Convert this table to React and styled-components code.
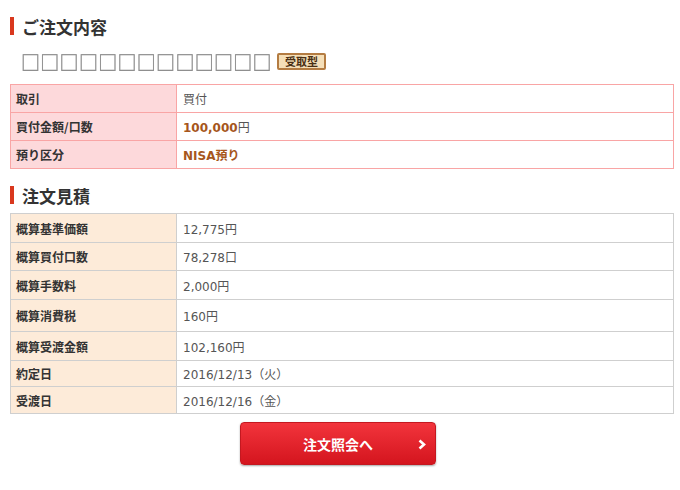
import styled, { createGlobalStyle } from "styled-components";

const GlobalStyle = createGlobalStyle`
  body {
    margin: 0;
    background: #fff;
    font-family: "DejaVu Sans", "Noto Sans CJK JP", sans-serif;
    color: #333;
  }
`;

const Page = styled.div`
  width: 680px;
  height: 490px;
  padding: 16px 6px 0 10px;
  box-sizing: border-box;
`;

const Heading = styled.h2`
  margin: 0 0 ${(p) => p.$gap}px 0;
  display: flex;
  align-items: center;
  height: 20px;
  font-size: 17px;
  font-weight: bold;
  color: #333;
  font-family: "Noto Sans CJK JP", sans-serif;
  &::before {
    content: "";
    width: 4px;
    height: 18px;
    background: #d9381e;
    margin-right: 8px;
  }
`;

const NameRow = styled.div`
  display: flex;
  align-items: center;
  gap: 5px;
  padding-left: 11px;
  height: 20px;
  margin-bottom: 13px;
`;

const Squares = styled.span`
  display: inline-block;
  transform: translateZ(0);
  font-family: "Noto Sans CJK JP", sans-serif;
  font-size: 19px;
  color: #8a8a8a;
  -webkit-text-stroke: 0.35px #8a8a8a;
  letter-spacing: 0.3px;
  line-height: 1;
`;

const Badge = styled.span`
  display: inline-flex;
  align-items: center;
  justify-content: center;
  width: 49px;
  height: 17px;
  box-sizing: border-box;
  background: #f5dfb8;
  border: 2px solid #b47c42;
  border-radius: 2px;
  font-family: "Noto Sans CJK JP", sans-serif;
  font-size: 11px;
  font-weight: bold;
  color: #4a2f14;
`;

const Table = styled.table`
  width: 664px;
  border-collapse: collapse;
  margin-bottom: ${(p) => p.$gap}px;
  font-size: 12px;
`;

const Row = styled.tr`
  height: ${(p) => p.$h}px;
`;

const Label = styled.th`
  width: 160px;
  text-align: left;
  padding: 0 0 0 5px;
  font-weight: bold;
  color: #333;
  background: ${(p) => p.$bg};
  border: 1px solid ${(p) => p.$line};
  font-family: "Noto Sans CJK JP", sans-serif;
`;

const Value = styled.td`
  padding: 0 0 0 6px;
  color: ${(p) => (p.$strong ? "#a6561c" : "#555")};
  font-weight: ${(p) => (p.$strong ? "bold" : "normal")};
  border: 1px solid ${(p) => p.$line};
  background: #fff;
`;

const Yen = styled.span`
  font-weight: normal;
  color: #555;
  font-family: "Noto Sans CJK JP", sans-serif;
`;

const ButtonWrap = styled.div`
  display: flex;
  justify-content: center;
  padding-right: 8px;
`;

const Button = styled.button`
  position: relative;
  width: 196px;
  height: 43px;
  border: 1px solid #c41820;
  border-radius: 4px;
  background: linear-gradient(#f2343c, #d4151e);
  box-shadow: 0 1px 2px rgba(0, 0, 0, 0.35);
  color: #fff;
  font-family: "Noto Sans CJK JP", sans-serif;
  font-size: 14px;
  font-weight: bold;
  cursor: pointer;
`;

const Chevron = styled.svg`
  position: absolute;
  right: 9px;
  top: 16px;
`;

const orderRows = [
  ["取引", "買付"],
  ["買付金額/口数", <>100,000<Yen>円</Yen></>, true],
  ["預り区分", "NISA預り", true],
];

const estRows = [
  ["概算基準価額", "12,775円", 29],
  ["概算買付口数", "78,278口", 28],
  ["概算手数料", "2,000円", 29],
  ["概算消費税", "160円", 32],
  ["概算受渡金額", "102,160円", 29],
  ["約定日", "2016/12/13（火）", 26],
  ["受渡日", "2016/12/16（金）", 27],
];

export default function App() {
  return (
    <Page>
      <GlobalStyle />
      <Heading $gap={15}>ご注文内容</Heading>
      <NameRow>
        <Squares>□□□□□□□□□□□□□</Squares>
        <Badge>受取型</Badge>
      </NameRow>
      <Table $gap={16}>
        <tbody>
          {orderRows.map(([k, v, strong]) => (
            <Row key={k} $h={28}>
              <Label $bg="#fdd9db" $line="#f9a5a5">{k}</Label>
              <Value $line="#f9a5a5" $strong={strong}>{v}</Value>
            </Row>
          ))}
        </tbody>
      </Table>
      <Heading $gap={8}>注文見積</Heading>
      <Table $gap={8}>
        <tbody>
          {estRows.map(([k, v, h]) => (
            <Row key={k} $h={h}>
              <Label $bg="#fdebd9" $line="#cfcfcf">{k}</Label>
              <Value $line="#cfcfcf">{v}</Value>
            </Row>
          ))}
        </tbody>
      </Table>
      <ButtonWrap>
        <Button>
          注文照会へ
          <Chevron width="8" height="11" viewBox="0 0 8 11">
            <path d="M1.5 1.5 L6 5.5 L1.5 9.5" fill="none" stroke="#fff" strokeWidth="2.6" />
          </Chevron>
        </Button>
      </ButtonWrap>
    </Page>
  );
}
